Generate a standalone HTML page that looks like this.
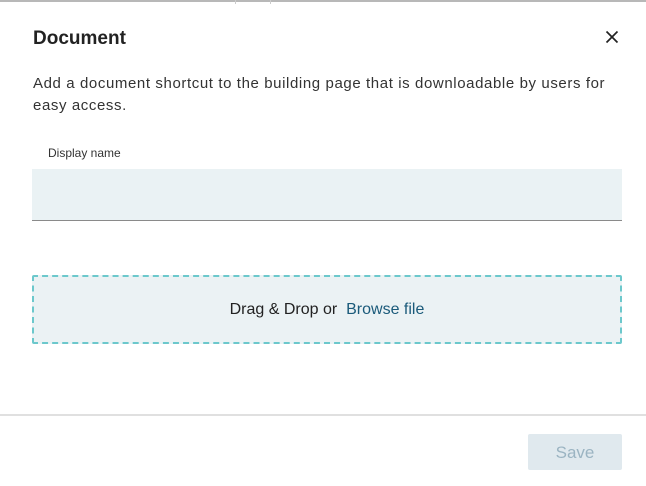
<!DOCTYPE html>
<html><head><style>
body{margin:0;width:646px;height:486px;background:#fff;font-family:"Liberation Sans",sans-serif;position:relative;overflow:hidden;color:#222}
.a{position:absolute}
</style></head><body>
<div class="a" style="left:0;top:0;width:646px;height:2px;background:#b8b8b8"></div>
<div class="a" style="left:235px;top:0;width:1px;height:4px;background:#ccc"></div>
<div class="a" style="left:270px;top:0;width:1px;height:4px;background:#ccc"></div>
<div class="a" style="left:33px;top:28px;font-size:19px;font-weight:bold;color:#222">Document</div>
<svg class="a" style="left:605px;top:30px" width="14" height="14" viewBox="0 0 14 14"><path d="M1.5 1.5L12.5 12.5M12.5 1.5L1.5 12.5" stroke="#222" stroke-width="1.7"/></svg>
<div class="a" style="left:33px;top:73px;width:592px;font-size:15px;line-height:22px;color:#333;letter-spacing:0.6px">Add a document shortcut to the building page that is downloadable by users for easy access.</div>
<div class="a" style="left:48px;top:146px;font-size:12px;color:#333">Display name</div>
<div class="a" style="left:32px;top:169px;width:590px;height:51px;background:#eaf2f4;border-bottom:1px solid #8a8a8a"></div>
<div class="a" style="left:32px;top:275px;width:586px;height:65px;background:#ebf2f4;border:2px dashed #6cc8cc;border-radius:2px"></div>
<div class="a" style="left:32px;top:301px;width:590px;text-align:center;font-size:16px;color:#222">Drag &amp; Drop or&nbsp; <span style="color:#1a5a7a">Browse file</span></div>
<div class="a" style="left:0;top:414px;width:646px;height:2px;background:#e0e0e0"></div>
<div class="a" style="left:528px;top:434px;width:94px;height:36px;background:#e0e9ee;border-radius:2px;color:#9bb4c2;font-size:17px;line-height:37px;text-align:center">Save</div>
</body></html>
